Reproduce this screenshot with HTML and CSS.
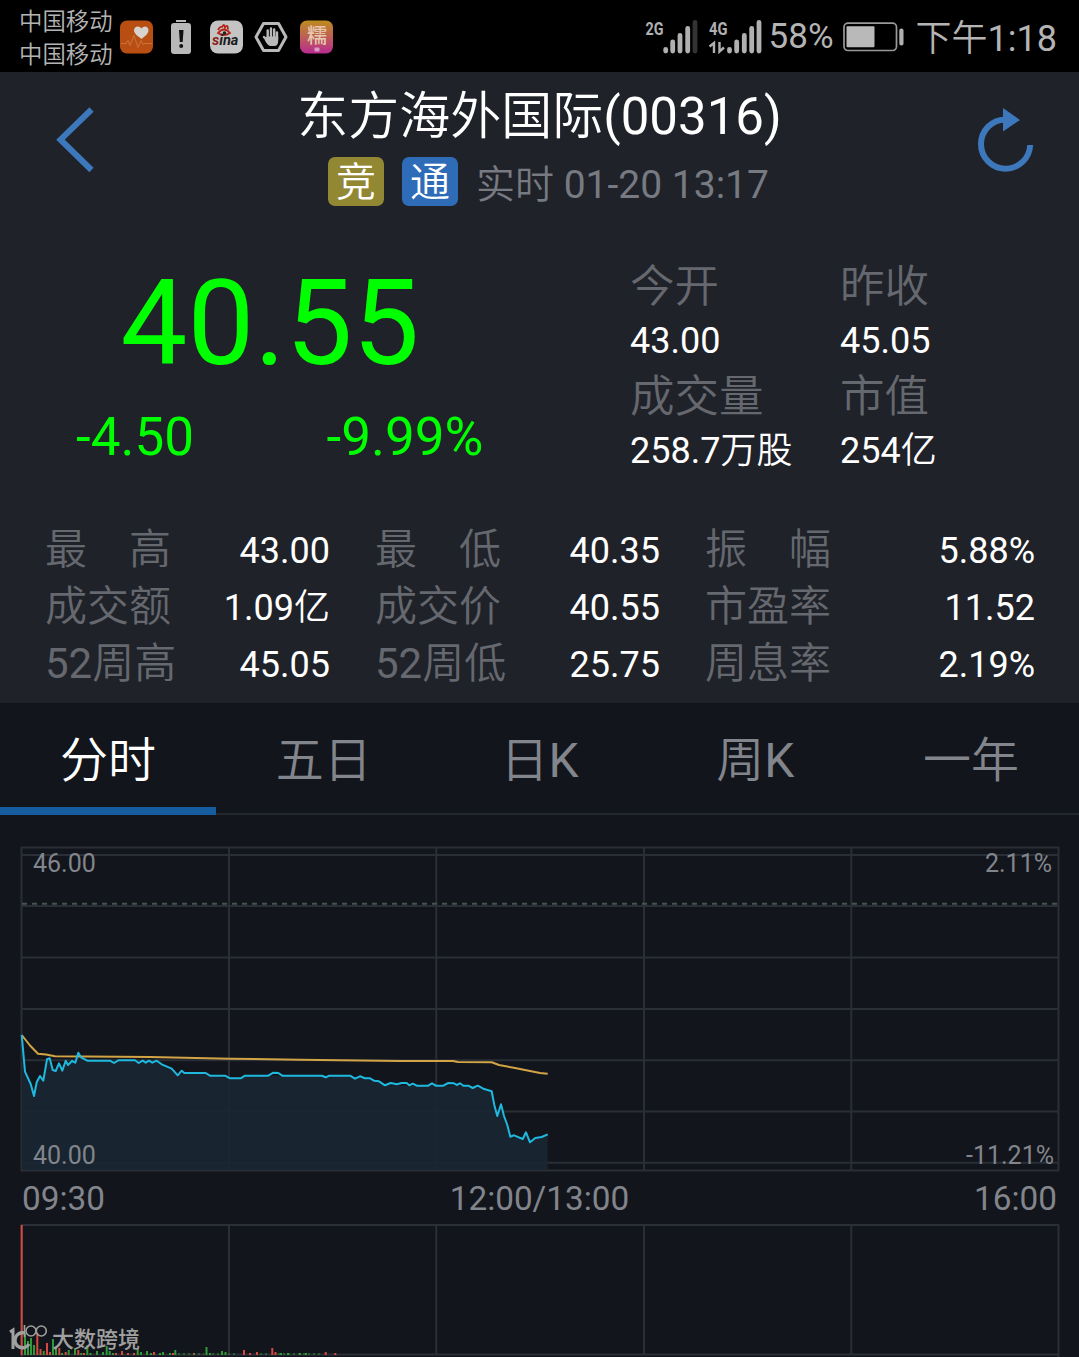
FILE: index.html
```html
<!DOCTYPE html>
<html lang="zh-CN">
<head>
  <meta charset="UTF-8">
  <title>东方海外国际(00316)</title>
  <meta name="viewport" content="width=device-width, initial-scale=1.0">
  <link rel="stylesheet" href="styles.css">
</head>
<body>

  <div class="status-bar">
    <div class="carriers">
      <div>中国移动</div>
      <div>中国移动</div>
    </div>
    <div class="notices">
      <svg width="33" height="34" viewBox="0 0 33 34">
        <rect width="33" height="33" y=".5" rx="7" fill="#b84e12"/>
        <path d="M1 23.500h5l2-3 2 5 4-10 4 12 3-7 2 4 2-1h7" fill="none" stroke="#d07c48" stroke-width=".8"/>
        <path d="M21.500 19c-4-3-7.500-5.500-7.500-8.700 0-4.300 5.400-5.300 7.500-1.800 2.100-3.500 7-2.500 7 1.800 0 3.200-3 5.700-7 8.700z" fill="#d8d2cc"/>
      </svg>
      <svg width="20" height="36" viewBox="0 0 20 36">
        <path d="M5 1h10v2H5z" fill="#b9b9b9"/>
        <rect y="4" width="20" height="31" rx="3" fill="#b9b9b9"/>
        <path d="M8 11h4.500l-.8 12H8.800z" fill="#111"/>
        <circle cx="10.200" cy="27" r="2" fill="#111"/>
      </svg>
      <svg width="33" height="34" viewBox="0 0 33 34">
        <rect width="33" height="33" y=".5" rx="8" fill="#c4c4c4"/>
        <path d="M8 13q6-7 12 0q-6 4-12 0z" fill="#c4c4c4" stroke="#b3261c" stroke-width="1.800"/>
        <path d="M8 10q2-4 4-3M12 7.500q2-5 3 0q3-4 3 2" fill="none" stroke="#b3261c" stroke-width="1.800"/>
        <circle cx="14.500" cy="13" r="1.800" fill="#222"/>
        <text x="2" y="25" class="sina"><tspan class="red">s</tspan>ina</text>
      </svg>
      <svg width="34" height="32" viewBox="0 0 34 32">
        <path d="M9.500 2.500h15l7.500 13.500-7.500 13.500h-15L2 16z" fill="none" stroke="#b9b9b9" stroke-width="3" stroke-linejoin="round"/>
        <path d="M13.700 17V9.500M17 16V7.500M20.200 16V8.500M23 18v-6.500M13.500 20l-3.500-4" fill="none" stroke="#b9b9b9" stroke-width="2.400" stroke-linecap="round"/>
        <path d="M12.500 15.500h11.700V20q0 5-4 5h-3.500q-3 0-6-6z" fill="#b9b9b9"/>
      </svg>
      <svg width="33" height="34" viewBox="0 0 33 34">
        <defs>
          <linearGradient id="app" x1="0" y1="0" x2="0" y2="1">
            <stop offset="0" stop-color="#bd8c1e"/>
            <stop offset=".5" stop-color="#bd5f56"/>
            <stop offset="1" stop-color="#b92b91"/>
          </linearGradient>
        </defs>
        <rect width="33" height="33" y=".5" rx="7" fill="url(#app)"/>
        <text x="7" y="22.500" class="app-char">糯</text>
        <rect x="14.500" y="27.500" width="5" height="4" rx="1" fill="#d99bc2"/>
      </svg>
    </div>
    <div class="system">
      <svg class="signals" width="120" height="40" viewBox="645 16 120 40">
        <text x="646.500" y="34" class="net" textLength="18" lengthAdjust="spacingAndGlyphs">2G</text>
        <g stroke="#b0b0b0" stroke-width="4.800" stroke-linecap="round">
          <path d="M666.700 48.500v1.500M673.700 41v9M681 34.500V50M688.700 27.500V50"/>
          <path d="M696 21.500V50" stroke="#333"/>
          <path d="M730.500 48.500v1.500M737.700 41v9M745.300 34.500V50M752.700 27.500V50M760 21.500V50"/>
        </g>
        <text x="710" y="34" class="net" textLength="18.500" lengthAdjust="spacingAndGlyphs">4G</text>
        <path d="M710.500 45.500l4.500-3.500v10M720.500 41v9.500l4.500-4" fill="none" stroke="#b0b0b0" stroke-width="2.400"/>
      </svg>
      <span class="percent">58%</span>
      <svg class="battery" width="62" height="30" viewBox="844 21 62 30">
        <rect x="845" y="22.200" width="52.500" height="27.300" rx="4" fill="none" stroke="#999" stroke-width="1.700"/>
        <rect x="847.500" y="25.300" width="28" height="21" rx="1" fill="#b9b9b9"/>
        <rect x="900.300" y="27.500" width="4.200" height="17" rx="2" fill="#b0b0b0"/>
      </svg>
      <span class="clock">下午1:18</span>
    </div>
  </div>

  <div class="quote">
    <div class="header">
      <svg class="back" width="40" height="70" viewBox="55 105 40 70">
        <path d="M91.500 109.500L60.500 139.700L91.500 170" fill="none" stroke="#3c78bb" stroke-width="6"/>
      </svg>
      <div class="heading">
        <h1>东方海外国际(00316)</h1>
        <div class="meta">
          <span class="badge gold">竞</span>
          <span class="badge blue">通</span>
          <span class="time">实时 01-20 13:17</span>
        </div>
      </div>
      <svg class="refresh" width="60" height="70" viewBox="976 105 60 70">
        <path d="M1005 119.500A24.600 24.600 0 1 0 1030.200 145" fill="none" stroke="#3c78bb" stroke-width="6"/>
        <path d="M1003 108l17 12-17 11.500z" fill="#3c78bb"/>
      </svg>
    </div>

    <div class="summary">
      <div class="price-box">
        <div class="price">40.55</div>
        <div class="change">
          <span>-4.50</span>
          <span>-9.99%</span>
        </div>
      </div>
      <div class="info">
        <span class="label">今开</span><span class="label">昨收</span>
        <span>43.00</span><span>45.05</span>
        <span class="label">成交量</span><span class="label">市值</span>
        <span>258.7万股</span><span>254亿</span>
      </div>
    </div>

    <div class="stats">
      <div class="stat"><span class="label">最　高</span><span>43.00</span></div>
      <div class="stat"><span class="label">最　低</span><span>40.35</span></div>
      <div class="stat"><span class="label">振　幅</span><span>5.88%</span></div>
      <div class="stat"><span class="label">成交额</span><span>1.09亿</span></div>
      <div class="stat"><span class="label">成交价</span><span>40.55</span></div>
      <div class="stat"><span class="label">市盈率</span><span>11.52</span></div>
      <div class="stat"><span class="label">52周高</span><span>45.05</span></div>
      <div class="stat"><span class="label">52周低</span><span>25.75</span></div>
      <div class="stat"><span class="label">周息率</span><span>2.19%</span></div>
    </div>
  </div>

  <div class="tabs">
    <div class="tab active">分时</div>
    <div class="tab">五日</div>
    <div class="tab">日K</div>
    <div class="tab">周K</div>
    <div class="tab">一年</div>
  </div>

  <svg class="chart" width="1079" height="360" viewBox="0 815 1079 360">
    <g class="grid">
      <path d="M21.500 847.500H1058.500V1170.500H21.500z"/>
      <path d="M21 855h1038M21 906h1038M21 957.500h1038M21 1009h1038M21 1060.300h1038M21 1111.500h1038M21 1162.700h1038"/>
      <path d="M229 847v323M436.300 847v323M644 847v323M851.300 847v323"/>
    </g>
    <path class="prev-close" d="M22 903.700H1058"/>
    <!-- price area -->
    <path class="area" d="M21.700 1035L25 1071.700L30.700 1084L34 1096L36.700 1082.300L40 1076L43.300 1080.700L47 1059.300L49.700 1058.300L52.700 1070L55.700 1071L59 1063.300L62.300 1070.700L65.700 1060.700L68 1065L72 1061L75.300 1062.700L78.300 1052.700L81 1057.300L87.300 1060.700H156.700L161.700 1064.300L171.700 1068.700L177.700 1075.300L184.300 1073H205.700L210 1075.700L230 1078.300H240.700L245 1075.700H350L374 1080.700L385 1085.300L463.300 1085.700L483.300 1088.700L491.700 1091.300L497.300 1116L501 1104.300L510.300 1136.700L522.700 1139L526 1132.300L530 1142.300L535.300 1138L547.700 1134.300V1170H21.700z"/>
    <path class="average" d="M21.700 1035L30 1045.500L38 1053.700L46 1054.500L55 1056.300L150 1057L230 1058.700L300 1059.700L400 1061H453L458 1062L491.700 1062.300L499 1065L515 1068L530 1071L540 1073L547.700 1073.700"/>
    <path class="line" d="M21.700 1035L25 1071.700L30.700 1084L34 1096L36.700 1082.300L40 1076L43.300 1080.700L47 1059.300L49.700 1058.300L52.700 1070L55.700 1071L59 1063.300L62.300 1070.700L65.700 1060.700L68 1065L72 1061L75.300 1062.700L78.300 1052.700L81 1057.300L87.300 1060.700H110L114 1063L118.300 1060.300H135L138.700 1063L142.700 1060.700L145.700 1062.700L149 1060.700L152.300 1062.700L156.700 1060.700L161.700 1064.300L171.700 1068.700L177.700 1075.300L181.700 1070.700L184.300 1073H205.700L210 1075.700H225L230 1078.300H240.700L245 1075.700H268.300L273.300 1072.700L278.300 1073L282.300 1075.700H321.700L325.700 1077.300L329.300 1075.700H350L355 1078.700L360 1076.300L365 1078.300H370L374 1080.700L379 1081.300L385 1085.300L390.700 1083L396.700 1084.300L401.700 1083H406.700L409.300 1085.300L412.700 1083.700L416.700 1085.700H428.300L432 1083.300L435.700 1085.700H443.300L448.300 1083L454 1083.300L456.700 1085L460 1083.300L463.300 1085.700H468.300L472.700 1088L477.700 1085.700L483.300 1088.700L491.700 1091.300L494.300 1105L497.300 1116L501 1104.300L504 1116L507.300 1125L510.300 1136.700L514 1135.300L522.700 1139L526 1132.300L530 1142.300L535.300 1138L541.700 1137L547.700 1134.300"/>
    <text x="33" y="871.500">46.00</text>
    <text x="1052" y="871.500" text-anchor="end">2.11%</text>
    <text x="33" y="1163.500">40.00</text>
    <text x="1054" y="1163.500" text-anchor="end">-11.21%</text>
  </svg>

  <div class="times">
    <span>09:30</span>
    <span>12:00/13:00</span>
    <span>16:00</span>
  </div>

  <svg class="volume" width="1079" height="136" viewBox="0 1221 1079 136">
    <g class="grid">
      <path d="M21.500 1357V1225H1058.500V1357M21 1354.500h1038"/>
      <path d="M229 1225v130M436.300 1225v130M644 1225v130M851.300 1225v130"/>
    </g>
    <path class="up" d="M21.700 1225V1355M37.300 1333v22M40.500 1349v6M47 1343v12M50 1352v3M59.300 1348v7M65.700 1352v3M78.300 1350v5M84 1353v2M116 1353v2M122 1351v4M128 1353v2M134 1353v2M154 1352v3M173 1353v2M194 1353v2M244 1350v5M250 1353v2M257 1352v3M272.300 1348v7M275.500 1352v3M325.700 1352v3M335.300 1353v2"/>
    <path class="down" d="M25 1333v22M28 1341v14M31 1338v17M34 1345v10M43.700 1351v4M53 1339v16M56 1347v8M62 1353v2M68.700 1350v5M75 1348v7M81.300 1353v2M87.300 1345v10M90.500 1353v2M97 1351v4M103 1352v3M106.700 1346v9M109.700 1351v4M113 1353v2M137.700 1349v6M141 1352v3M147 1351v4M151 1353v2M160 1353v2M163 1352v3M170 1353v2M175.300 1350v5M206.500 1347v8M210 1353v2M222 1351v4M225.500 1352v3M281 1353v2M288 1353v2M300 1353v2M306 1353v2"/>
    <path class="down" d="M178 1354h26M212 1354h8M228 1354h10M260 1354h10M278 1354h45" stroke-dasharray="2 3" opacity=".5"/>
  </svg>

  <div class="watermark">
    <svg width="40" height="28" viewBox="8 1322 40 28">
      <path d="M10 1331l3-2v19" fill="none" stroke="#a0a0a0" stroke-width="3"/>
      <path d="M24 1332a7.500 7.500 0 1 0 5 11" fill="none" stroke="#a0a0a0" stroke-width="3.500"/>
      <path d="M24.500 1324v12" stroke="#a0a0a0" stroke-width="1.600"/>
      <circle cx="31" cy="1330" r="5" fill="none" stroke="#a0a0a0" stroke-width="1.600"/>
      <circle cx="41.300" cy="1330" r="5" fill="none" stroke="#a0a0a0" stroke-width="1.600"/>
    </svg>
    <span>大数跨境</span>
  </div>

</body>
</html>
```
FILE: styles.css
```css
* {
  box-sizing: border-box;
}

body {
  margin: 0;
  width: 1079px;
  height: 1357px;
  overflow: hidden;
  position: relative;
  background: #12151b;
  color: #fff;
  font-family: Roboto, "Noto Sans CJK SC DemiLight", "Noto Sans CJK SC", sans-serif;
}

svg {
  display: block;
  flex: none;
}

span {
  white-space: nowrap;
}

/* status bar */
.status-bar {
  height: 72px;
  padding: 4px 22px 0 19px;
  display: flex;
  background: #000;
  color: #b4b4b4;
}

.carriers {
  width: 101px;
  padding-top: 2px;
  font-size: 23.4px;
  line-height: 33px;
}

.notices {
  height: 66px;
  display: flex;
  align-items: center;
}

.notices svg:nth-child(2) {
  margin: 0 19px 0 18px;
}

.notices svg:nth-child(4) {
  margin: 0 12px 0 11px;
}

.sina {
  font: italic 700 14.5px Roboto, sans-serif;
  fill: #1c1c1c;
}

.sina .red {
  fill: #8c1f18;
}

.app-char {
  font: 500 20px "Noto Sans CJK SC", sans-serif;
  fill: #e6c9b0;
}

.system {
  margin-left: auto;
  height: 66px;
  display: flex;
  align-items: center;
}

.net {
  font: 700 19px Roboto, sans-serif;
  fill: #b0b0b0;
}

.percent {
  font-size: 35px;
  line-height: 64px;
  margin: 0 9px 0 5px;
}

.battery {
  margin-right: 11px;
}

.clock {
  font-size: 36px;
  line-height: 40px;
  padding-top: 3px;
}

/* quote panel */
.quote {
  height: 631px;
  background: #1f2229;
}

.header {
  height: 158px;
  padding: 17px 43px 0 55px;
  display: flex;
  justify-content: space-between;
}

.back,
.refresh {
  margin-top: 16px;
}

.heading {
  text-align: center;
  padding-left: 8px;
}

h1 {
  margin: 0;
  font-size: 51px;
  line-height: 56px;
  font-weight: 400;
}

.meta {
  margin-top: 12px;
  display: flex;
  padding-left: 18px;
  justify-content: center;
}

.badge {
  width: 56px;
  height: 49px;
  margin-right: 18px;
  border-radius: 7px;
  font-size: 40px;
  line-height: 51px;
}

.gold {
  background: #928733;
}

.blue {
  background: #2f6cb8;
}

.time {
  color: #777a81;
  font-size: 39px;
  line-height: 57px;
}

.summary {
  height: 291px;
  display: flex;
}

.price-box {
  width: 630px;
  padding-top: 24px;
  color: #0f0;
}

.price {
  width: 540px;
  font-size: 119px;
  line-height: 140px;
  text-align: center;
}

.change {
  display: flex;
  font-size: 53px;
  line-height: 86px;
}

.change span {
  width: 270px;
  text-align: center;
}

.info {
  padding-top: 29px;
  display: grid;
  grid-template-columns: 210px 200px;
  grid-template-rows: repeat(4, 55px);
  font-size: 36px;
  line-height: 55px;
}

.label {
  color: #65686e;
}

.info .label {
  font-size: 44.500px;
  line-height: 57px;
}

.stats {
  padding: 0 44px 0 45px;
  display: grid;
  grid-template-columns: 285px 285px 330px;
  column-gap: 45px;
  grid-auto-rows: 57px;
  font-size: 36px;
  line-height: 60px;
}

.stat {
  display: flex;
  justify-content: space-between;
}

.stat .label {
  font-size: 42px;
  line-height: 57px;
}

/* period tabs */
.tabs {
  height: 112px;
  display: grid;
  grid-template-columns: repeat(5, 1fr);
  border-bottom: 2px solid #22262d;
}

.tab {
  height: 112px;
  font-size: 48px;
  line-height: 116px;
  text-align: center;
  color: #82858c;
}

.tab.active {
  color: #fff;
  border-bottom: 8px solid #155d9f;
}

/* charts */
.grid path {
  fill: none;
  stroke: #2a2f37;
  stroke-width: 2;
}

.prev-close {
  stroke: #46564f;
  stroke-width: 2;
  stroke-dasharray: 5 5;
}

.area {
  fill: #1a2632;
  fill-opacity: .9;
}

.average,
.line {
  fill: none;
  stroke: #d3a445;
  stroke-width: 2;
  stroke-linejoin: round;
}

.line {
  stroke: #1fb9e0;
}

.chart text {
  font-size: 25px;
  fill: #82858c;
}

.times {
  height: 46px;
  padding: 0 22px;
  display: flex;
  justify-content: space-between;
  color: #82858c;
  font-size: 33.300px;
  line-height: 47px;
}

.up,
.down {
  stroke: #d5493f;
  stroke-width: 2;
}

.down {
  stroke: #2f9a37;
}

/* logo over the volume chart */
.watermark {
  position: absolute;
  left: 8px;
  bottom: 6px;
  display: flex;
  align-items: center;
  gap: 4px;
  color: #a0a0a0;
  font: 500 22px/28px "Noto Sans CJK SC", sans-serif;
}
```
